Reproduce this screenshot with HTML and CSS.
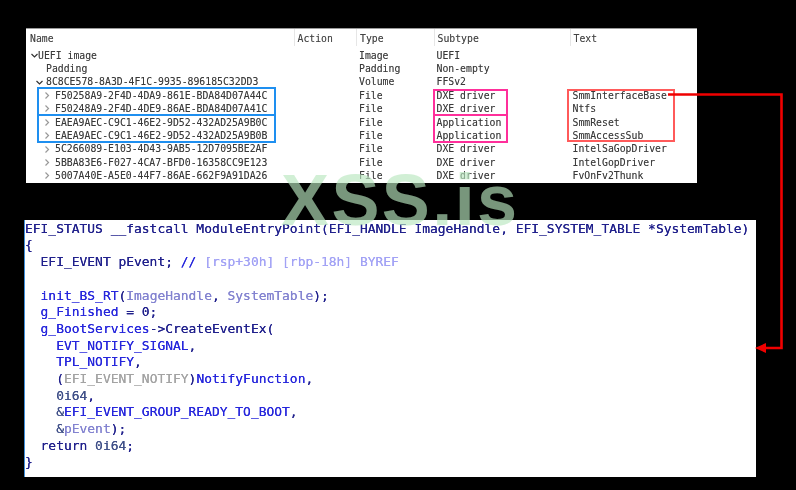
FILE: index.html
```html
<!DOCTYPE html>
<html lang="en">
<head>
<meta charset="utf-8">
<title>UEFI image</title>
<link rel="stylesheet" href="styles.css">
</head>
<body>
<main class="stage">
  <section class="tree">
    <div class="row head"><div class="name hname">Name</div><div class="hcell">Action</div><div class="hcell">Type</div><div class="hcell">Subtype</div><div class="hcell">Text</div></div>
    <div class="row"><div class="name lvl0"><svg class="chev" viewBox="0 0 7 7"><path d="M.5 2 3.5 5 6.5 2" class="open"/></svg>UEFI image</div><div></div><div>Image</div><div>UEFI</div><div></div></div>
    <div class="row"><div class="name plain">Padding</div><div></div><div>Padding</div><div>Non-empty</div><div></div></div>
    <div class="row"><div class="name lvl1"><svg class="chev" viewBox="0 0 7 7"><path d="M.5 2 3.5 5 6.5 2" class="open"/></svg>8C8CE578-8A3D-4F1C-9935-896185C32DD3</div><div></div><div>Volume</div><div>FFSv2</div><div></div></div>
    <div class="row"><div class="name lvl2"><svg class="chev" viewBox="0 0 7 7"><path d="M1.5 .5 4.5 3.5 1.5 6.5"/></svg>F50258A9-2F4D-4DA9-861E-BDA84D07A44C</div><div></div><div>File</div><div>DXE driver</div><div>SmmInterfaceBase</div></div>
    <div class="row"><div class="name lvl2"><svg class="chev" viewBox="0 0 7 7"><path d="M1.5 .5 4.5 3.5 1.5 6.5"/></svg>F50248A9-2F4D-4DE9-86AE-BDA84D07A41C</div><div></div><div>File</div><div>DXE driver</div><div>Ntfs</div></div>
    <div class="row"><div class="name lvl2"><svg class="chev" viewBox="0 0 7 7"><path d="M1.5 .5 4.5 3.5 1.5 6.5"/></svg>EAEA9AEC-C9C1-46E2-9D52-432AD25A9B0C</div><div></div><div>File</div><div>Application</div><div>SmmReset</div></div>
    <div class="row"><div class="name lvl2"><svg class="chev" viewBox="0 0 7 7"><path d="M1.5 .5 4.5 3.5 1.5 6.5"/></svg>EAEA9AEC-C9C1-46E2-9D52-432AD25A9B0B</div><div></div><div>File</div><div>Application</div><div>SmmAccessSub</div></div>
    <div class="row"><div class="name lvl2"><svg class="chev" viewBox="0 0 7 7"><path d="M1.5 .5 4.5 3.5 1.5 6.5"/></svg>5C266089-E103-4D43-9AB5-12D7095BE2AF</div><div></div><div>File</div><div>DXE driver</div><div>IntelSaGopDriver</div></div>
    <div class="row"><div class="name lvl2"><svg class="chev" viewBox="0 0 7 7"><path d="M1.5 .5 4.5 3.5 1.5 6.5"/></svg>5BBA83E6-F027-4CA7-BFD0-16358CC9E123</div><div></div><div>File</div><div>DXE driver</div><div>IntelGopDriver</div></div>
    <div class="row"><div class="name lvl2"><svg class="chev" viewBox="0 0 7 7"><path d="M1.5 .5 4.5 3.5 1.5 6.5"/></svg>5007A40E-A5E0-44F7-86AE-662F9A91DA26</div><div></div><div>File</div><div>DXE driver</div><div>FvOnFv2Thunk</div></div>
  </section>

  <section class="code">
<div class="line"><span class="n">EFI_STATUS __fastcall ModuleEntryPoint(EFI_HANDLE ImageHandle, EFI_SYSTEM_TABLE *SystemTable)</span></div>
<div class="line"><span class="n">{</span></div>
<div class="line">  <span class="n">EFI_EVENT pEvent;</span> <span class="b">//</span> <span class="c">[rsp+30h] [rbp-18h] BYREF</span></div>
<div class="line"> </div>
<div class="line">  <span class="b">init_BS_RT</span><span class="n">(</span><span class="a">ImageHandle</span><span class="n">, </span><span class="a">SystemTable</span><span class="n">);</span></div>
<div class="line">  <span class="b">g_Finished</span><span class="n"> = 0;</span></div>
<div class="line">  <span class="b">g_BootServices</span><span class="n">-&gt;CreateEventEx(</span></div>
<div class="line">    <span class="b">EVT_NOTIFY_SIGNAL</span><span class="n">,</span></div>
<div class="line">    <span class="b">TPL_NOTIFY</span><span class="n">,</span></div>
<div class="line">    <span class="n">(</span><span class="g">EFI_EVENT_NOTIFY</span><span class="n">)</span><span class="b">NotifyFunction</span><span class="n">,</span></div>
<div class="line">    <span class="m">0i64</span><span class="n">,</span></div>
<div class="line">    <span class="m">&amp;</span><span class="b">EFI_EVENT_GROUP_READY_TO_BOOT</span><span class="n">,</span></div>
<div class="line">    <span class="m">&amp;</span><span class="a">pEvent</span><span class="n">);</span></div>
<div class="line">  <span class="n">return </span><span class="m">0i64</span><span class="n">;</span></div>
<div class="line"><span class="n">}</span></div>
  </section>

  <div class="box blue b1"></div>
  <div class="box blue b2"></div>
  <div class="box pink p1"></div>
  <div class="box pink p2"></div>
  <div class="box coral c1"></div>
  <svg class="arrow" viewBox="0 0 796 490" aria-hidden="true">
    <path d="M668 94.5H781.5V348H764" fill="none" stroke="#f00000" stroke-width="2.6"/>
    <path d="M755 348 766 343V353Z" fill="#f00000"/>
  </svg>
  <div class="mark">XSS.is</div>
</main>
</body>
</html>
```
FILE: styles.css
```css
* { box-sizing: border-box; }
html, body { margin: 0; padding: 0; background: #000; }
.stage {
  position: relative;
  width: 796px;
  height: 490px;
  overflow: hidden;
  background: #000;
  padding: 28px 0 0 0;
}
.tree {
  width: 671px;
  height: 155px;
  margin-left: 26px;
  background: #fff;
  border-top: 1px solid #9a9a9a;
  font: 9.8px/13.4px "DejaVu Sans Mono", "Liberation Mono", monospace;
  color: #3a3a3a;
  text-shadow: 0 0 .4px rgba(40, 40, 40, .4);
  filter: blur(.3px);
}
.row {
  display: grid;
  grid-template-columns: 270.5px 62.5px 77.5px 136px 1fr;
  height: 13.4px;
  white-space: pre;
}
.head { height: 19.6px; line-height: 19px; color: #444; }
.hname { padding-left: 4px; }
.hcell { border-left: 1px solid #e6e6e6; margin-left: -3px; padding-left: 3px; height: 17px; }
.name { display: flex; align-items: center; }
.chev { width: 7px; height: 7px; flex: none; }
.chev path { fill: none; stroke: #999; stroke-width: 1.2; }
.chev path.open { stroke: #333; }
.lvl0 { padding-left: 5px; }
.lvl1 { padding-left: 10px; }
.lvl1 .chev { margin-right: 3px; }
.lvl2 { padding-left: 18px; }
.lvl2 .chev { margin-right: 4px; }
.plain { padding-left: 20px; }
.code {
  width: 732px;
  height: 257px;
  margin: 37px 0 0 24px;
  padding-top: .8px;
  background: #fff;
  border-left: 1px solid #3f8fdc;
  font: 12.95px/16.7px "DejaVu Sans Mono", "Liberation Mono", monospace;
  text-shadow: 0 0 .35px currentColor;
  filter: blur(.3px);
}
.line { height: 16.7px; white-space: pre; }
.n { color: #20208c; }
.a { color: #8383d0; }
.b { color: #2626dc; }
.c { color: #a2a2f5; }
.g { color: #a3a3a3; }
.m { color: #3f4f88; }
.box { position: absolute; border-style: solid; border-width: 2px; }
.blue { border-color: #1e8ff0; left: 37px; width: 239px; }
.b1 { top: 87px; height: 29px; }
.b2 { top: 114px; height: 29px; }
.pink { border-color: #ff2f9b; left: 433px; width: 75px; }
.p1 { top: 89px; height: 27px; }
.p2 { top: 114px; height: 29px; }
.coral { border-color: #ff5a5a; }
.c1 { left: 567px; top: 89px; width: 108px; height: 53px; }
.arrow { position: absolute; left: 0; top: 0; width: 796px; height: 490px; }
.mark {
  position: absolute;
  left: 281px;
  top: 157.5px;
  font: bold 72px/84px "Liberation Sans", Arial, sans-serif;
  letter-spacing: 2.4px;
  color: rgba(185, 230, 190, .65);
  white-space: pre;
}
```
